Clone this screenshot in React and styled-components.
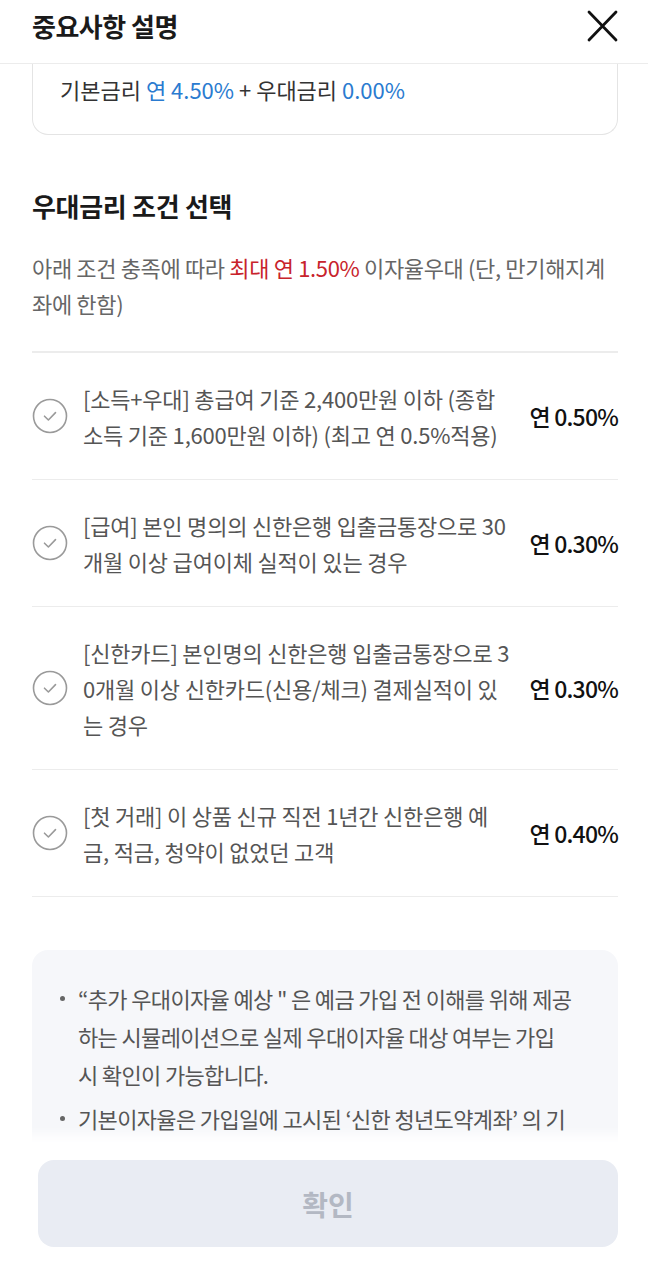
import React from "react";
import styled, { createGlobalStyle } from "styled-components";

const GlobalStyle = createGlobalStyle`
  html, body {
    margin: 0;
    padding: 0;
    background: #fff;
  }
  body {
    font-family: "Noto Sans CJK KR", "Noto Sans", sans-serif;
    color: #222;
  }
  * {
    box-sizing: border-box;
  }
`;

// 줄바꿈은 원본 화면과 동일하게 맞춤
const conditions = [
  {
    lines: ["[소득+우대] 총급여 기준 2,400만원 이하 (종합", "소득 기준 1,600만원 이하) (최고 연 0.5%적용)"],
    rate: "연 0.50%",
  },
  {
    lines: ["[급여] 본인 명의의 신한은행 입출금통장으로 30", "개월 이상 급여이체 실적이 있는 경우"],
    rate: "연 0.30%",
  },
  {
    lines: [
      "[신한카드] 본인명의 신한은행 입출금통장으로 3",
      "0개월 이상 신한카드(신용/체크) 결제실적이 있",
      "는 경우",
    ],
    rate: "연 0.30%",
  },
  {
    lines: ["[첫 거래] 이 상품 신규 직전 1년간 신한은행 예", "금, 적금, 청약이 없었던 고객"],
    rate: "연 0.40%",
  },
];

const notices = [
  [
    "“추가 우대이자율 예상 \" 은 예금 가입 전 이해를 위해 제공",
    "하는 시뮬레이션으로 실제 우대이자율 대상 여부는 가입",
    "시 확인이 가능합니다.",
  ],
  ["기본이자율은 가입일에 고시된 ‘신한 청년도약계좌’ 의 기", "본이자율이 적용됩니다."],
];

function Lines({ lines }) {
  return lines.map((line, i) => (
    <React.Fragment key={i}>
      {i > 0 && <br />}
      {line}
    </React.Fragment>
  ));
}

function CheckCircle() {
  return (
    <svg width="36" height="36" viewBox="0 0 36 36" fill="none">
      <circle cx="18" cy="18" r="16.5" stroke="#9a9a9a" strokeWidth="1.6" />
      <path
        d="M12.5 18.2 L16.4 22 L23.5 14.6"
        stroke="#9a9a9a"
        strokeWidth="1.6"
        strokeLinecap="round"
        strokeLinejoin="round"
      />
    </svg>
  );
}

function CloseIcon() {
  return (
    <svg width="32" height="32" viewBox="0 0 32 32" fill="none">
      <path
        d="M3 2 L30 30 M30 2 L3 30"
        stroke="#111"
        strokeWidth="2.8"
        strokeLinecap="round"
      />
    </svg>
  );
}

export default function App() {
  return (
    <>
      <GlobalStyle />
      <Sheet>
        <Header>
          <Title>중요사항 설명</Title>
          <CloseButton aria-label="닫기">
            <CloseIcon />
          </CloseButton>
        </Header>

        <Body>
          <RateCard>
            기본금리 <Blue>연 4.50%</Blue> + 우대금리 <Blue>0.00%</Blue>
          </RateCard>

          <SectionTitle>우대금리 조건 선택</SectionTitle>
          <Description>
            아래 조건 충족에 따라 <Red>최대 연 1.50%</Red> 이자율우대 (단, 만기해지계
            <br />
            좌에 한함)
          </Description>

          <ConditionList>
            {conditions.map((item) => (
              <ConditionRow key={item.lines[0]}>
                <IconBox>
                  <CheckCircle />
                </IconBox>
                <ConditionText>
                  <Lines lines={item.lines} />
                </ConditionText>
                <Rate>{item.rate}</Rate>
              </ConditionRow>
            ))}
          </ConditionList>

          <NoticeBox>
            {notices.map((n) => (
              <NoticeItem key={n[0]}>
                <Lines lines={n} />
              </NoticeItem>
            ))}
          </NoticeBox>
        </Body>

        <Footer>
          <ConfirmButton disabled>확인</ConfirmButton>
        </Footer>
      </Sheet>
    </>
  );
}

const Sheet = styled.div`
  display: flex;
  flex-direction: column;
  height: 100vh;
  background: #fff;
  overflow: hidden;
`;

const Header = styled.header`
  flex: none;
  display: flex;
  align-items: center;
  justify-content: space-between;
  height: 64px;
  padding: 0 30px 12px 32px;
  border-bottom: 1px solid #ececec;
`;

const Title = styled.h1`
  margin: 0;
  font-size: 26px;
  line-height: 34px;
  font-weight: 700;
  letter-spacing: -0.5px;
  color: #1a1a1a;
`;

const CloseButton = styled.button`
  display: flex;
  padding: 0;
  border: 0;
  background: none;
  cursor: pointer;
`;

const Body = styled.div`
  flex: 1;
  overflow: hidden;
  padding: 0 30px 0 32px;
`;

const RateCard = styled.div`
  padding: 10px 27px 30px;
  border: 1px solid #e4e4e4;
  border-top: none;
  border-radius: 0 0 16px 16px;
  font-size: 22px;
  line-height: 30px;
  letter-spacing: 0;
  color: #333;
  white-space: nowrap;
`;

const Blue = styled.span`
  color: #2a7bd0;
`;

const Red = styled.span`
  color: #c8232c;
`;

const SectionTitle = styled.h2`
  margin: 55px 0 0;
  font-size: 26px;
  line-height: 32px;
  font-weight: 700;
  letter-spacing: -0.3px;
  color: #1a1a1a;
`;

const Description = styled.p`
  margin: 27px 0 0;
  font-size: 22px;
  line-height: 36px;
  letter-spacing: -0.35px;
  color: #666;
  white-space: nowrap;
`;

const ConditionList = styled.ul`
  list-style: none;
  margin: 30px 0 0;
  padding: 0;
  border-top: 2px solid #ececec;
`;

const ConditionRow = styled.li`
  display: flex;
  align-items: center;
  padding: 27px 0;
  border-bottom: 1px solid #ececec;
`;

const IconBox = styled.div`
  flex: none;
  display: flex;
  width: 36px;
  margin-right: 15px;
`;

const ConditionText = styled.div`
  flex: 1;
  font-size: 22px;
  line-height: 36px;
  letter-spacing: -0.2px;
  color: #555;
  white-space: nowrap;
`;

const Rate = styled.div`
  flex: none;
  text-align: right;
  font-size: 23px;
  font-weight: 500;
  letter-spacing: -0.8px;
  color: #111;
  white-space: nowrap;
`;

const NoticeBox = styled.ul`
  list-style: none;
  margin: 53px 0 0;
  padding: 29px 20px 30px 28px;
  background: #f6f7fa;
  border-radius: 16px;
`;

const NoticeItem = styled.li`
  position: relative;
  padding-left: 18px;
  font-size: 22px;
  line-height: 38px;
  letter-spacing: -0.65px;
  color: #555;
  white-space: nowrap;

  & + & {
    margin-top: 6px;
  }

  &::before {
    content: "";
    position: absolute;
    left: 0;
    top: 17px;
    width: 5px;
    height: 5px;
    border-radius: 50%;
    background: #666;
  }
`;

const Footer = styled.footer`
  flex: none;
  padding: 18px 30px 19px 38px;
  background: #fff;
  box-shadow: 0 -8px 10px rgba(255, 255, 255, 0.9);
`;

const ConfirmButton = styled.button`
  display: block;
  width: 100%;
  height: 87px;
  border: 0;
  border-radius: 16px;
  background: #e9ecf3;
  font-family: "Noto Sans CJK KR", "Noto Sans", sans-serif;
  font-size: 28px;
  font-weight: 700;
  color: #b3b8c3;
`;
